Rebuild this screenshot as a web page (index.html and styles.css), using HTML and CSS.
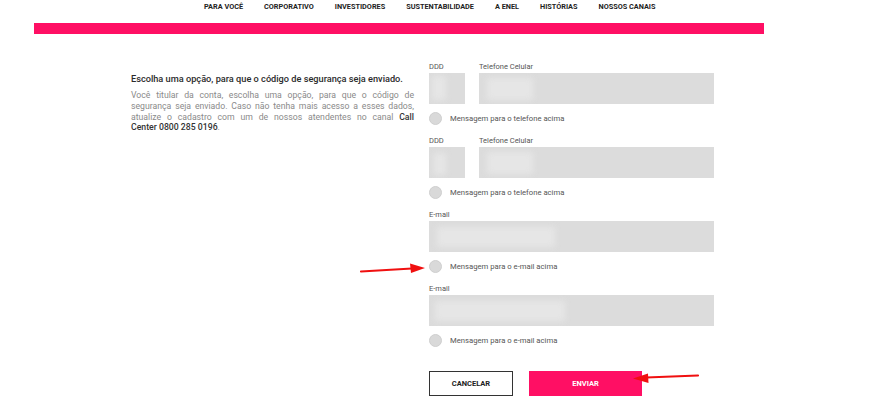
FILE: index.html
```html
<!DOCTYPE html>
<html lang="pt-BR">
<head>
<meta charset="utf-8">
<link rel="stylesheet" href="styles.css">
</head>
<body>
<header class="topnav">
  <a>PARA VOCÊ</a>
  <a>CORPORATIVO</a>
  <a>INVESTIDORES</a>
  <a>SUSTENTABILIDADE</a>
  <a>A ENEL</a>
  <a>HISTÓRIAS</a>
  <a>NOSSOS CANAIS</a>
</header>
<div class="pinkbar"></div>
<main class="content">
  <section class="intro">
    <h2 class="intro-title">Escolha uma opção, para que o código de segurança seja enviado.</h2>
    <p class="intro-text">
      <span class="ln">Você titular da conta, escolha uma opção, para que o código de</span>
      <span class="ln">segurança seja enviado. Caso não tenha mais acesso a esses dados,</span>
      <span class="ln">atualize o cadastro com um de nossos atendentes no canal <b>Call</b></span>
      <span class="ln last"><b>Center 0800 285 0196</b>.</span>
    </p>
  </section>
  <form class="options">
    <div class="group">
      <div class="row">
        <div class="col ddd"><label class="lbl">DDD</label><div class="box"><i class="blur b-ddd1"></i></div></div>
        <div class="col grow"><label class="lbl">Telefone Celular</label><div class="box"><i class="blur b-tel"></i></div></div>
      </div>
      <div class="radio"><span class="dot"></span>Mensagem para o telefone acima</div>
    </div>
    <div class="group">
      <div class="row">
        <div class="col ddd"><label class="lbl">DDD</label><div class="box"><i class="blur b-ddd2"></i></div></div>
        <div class="col grow"><label class="lbl">Telefone Celular</label><div class="box"><i class="blur b-tel"></i></div></div>
      </div>
      <div class="radio"><span class="dot"></span>Mensagem para o telefone acima</div>
    </div>
    <div class="group">
      <div class="col"><label class="lbl">E-mail</label><div class="box"><i class="blur b-mail"></i></div></div>
      <div class="radio"><span class="dot"></span>Mensagem para o e-mail acima</div>
    </div>
    <div class="group">
      <div class="col"><label class="lbl">E-mail</label><div class="box"><i class="blur b-mail2"></i></div></div>
      <div class="radio"><span class="dot"></span>Mensagem para o e-mail acima</div>
    </div>
    <div class="actions">
      <button type="button" class="btn cancel">CANCELAR</button>
      <button type="button" class="btn send">ENVIAR</button>
    </div>
  </form>
</main>
<svg class="arrows" width="886" height="402" viewBox="0 0 886 402">
  <line x1="361" y1="271.5" x2="412" y2="268.5" stroke="#f01010" stroke-width="2.2" stroke-linecap="round"/>
  <polygon points="425,268 410,263.5 411,273" fill="#f01010"/>
  <line x1="698" y1="375.5" x2="646" y2="377.5" stroke="#f01010" stroke-width="2.2" stroke-linecap="round"/>
  <polygon points="633,378.5 648,373.5 648.5,383" fill="#f01010"/>
</svg>
</body>
</html>
```

FILE: styles.css
```css
* { box-sizing: border-box; }
html, body { margin: 0; padding: 0; background: #fff; }
body {
  width: 886px;
  height: 402px;
  overflow: hidden;
  position: relative;
  font-family: Roboto, "Liberation Sans", Arial, sans-serif;
  color: #333;
}
.topnav {
  display: flex;
  gap: 21px;
  padding-left: 204px;
  height: 23px;
  padding-top: 3px;
}
.topnav a {
  font-size: 7.3px;
  font-weight: 700;
  color: #222;
  line-height: 8px;
}
.pinkbar {
  margin-left: 34px;
  width: 730px;
  height: 11px;
  background: #ff0f64;
}
.content {
  display: flex;
  padding-left: 131px;
  padding-top: 28px;
}
.intro {
  width: 283px;
  padding-top: 11px;
}
.intro-title {
  margin: 0 0 6px;
  font-size: 9.2px;
  font-weight: 500;
  color: #2a2a2a;
  line-height: 11px;
  white-space: nowrap;
}
.intro-text {
  margin: 0;
  font-size: 8.7px;
  line-height: 10.8px;
  color: #8a8a8a;
}
.intro-text .ln {
  display: block;
  text-align: justify;
  text-align-last: justify;
  white-space: nowrap;
}
.intro-text .ln.last { text-align-last: left; }
.intro-text b { color: #333; font-weight: 500; }
.options {
  margin-left: 15px;
  width: 285px;
  display: flex;
  flex-direction: column;
}
.group { margin-bottom: 11px; }
.row { display: flex; gap: 14px; }
.col { display: flex; flex-direction: column; }
.ddd { width: 36px; }
.grow { flex: 1; }
.lbl {
  display: block;
  font-size: 7.5px;
  line-height: 9px;
  color: #555;
  margin-bottom: 2px;
  white-space: nowrap;
}
.box {
  height: 31px;
  background: #dcdcdc;
  position: relative;
  overflow: hidden;
}
.blur {
  position: absolute;
  display: block;
  background: #e6e6e6;
  filter: blur(3px);
}
.b-ddd1 { left: 3px; top: 3px; width: 14px; height: 24px; }
.b-ddd2 { left: 5px; top: 6px; width: 12px; height: 22px; }
.b-tel { left: 8px; top: 5px; width: 46px; height: 22px; }
.b-mail { left: 8px; top: 6px; width: 118px; height: 20px; }
.b-mail2 { left: 6px; top: 6px; width: 130px; height: 20px; }
.radio {
  display: flex;
  align-items: center;
  gap: 8px;
  margin-top: 8px;
  height: 13px;
  font-size: 7.7px;
  color: #555;
}
.dot {
  width: 13px;
  height: 13px;
  border-radius: 50%;
  background: #d9d9d9;
  border: 1px solid #cfcfcf;
}
.actions {
  display: flex;
  gap: 16px;
  margin-top: 13px;
}
.btn {
  height: 25px;
  font-family: Roboto, "Liberation Sans", Arial, sans-serif;
  font-size: 7.5px;
  font-weight: 700;
  padding: 0;
  cursor: pointer;
}
.cancel {
  width: 84px;
  background: #fff;
  border: 1px solid #333;
  color: #222;
}
.send {
  width: 113px;
  background: #ff0f64;
  border: 0;
  color: #fff;
}
.arrows {
  position: absolute;
  left: 0;
  top: 0;
  pointer-events: none;
}
```
